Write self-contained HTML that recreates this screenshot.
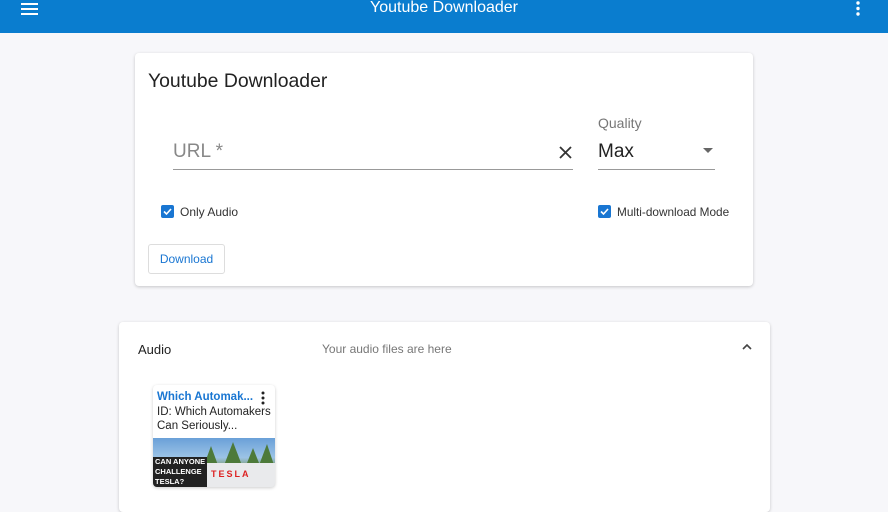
<!DOCTYPE html>
<html><head><style>
body{margin:0;width:888px;height:500px;background:#f7f7fa;font-family:"Liberation Sans",sans-serif;overflow:hidden;position:relative}
.bar{position:absolute;left:0;top:0;width:888px;height:33px;background:#0a7dcf;color:#fff}
.card{position:absolute;background:#fff;border-radius:4px;box-shadow:0 1px 3px rgba(0,0,0,.2)}
.abs{position:absolute}
.cb{position:absolute;width:13px;height:13px;background:#1976d2;border-radius:2px}
</style></head><body>
<div class="bar">
<svg class="abs" style="left:21px;top:2px" width="18" height="14"><rect y="1" width="17" height="2" fill="#fff"/><rect y="6" width="17" height="2" fill="#fff"/><rect y="11" width="17" height="2" fill="#fff"/></svg>
<div class="abs" style="left:0;width:888px;top:-1px;text-align:center;font-size:16px">Youtube Downloader</div>
<svg class="abs" style="left:856px;top:1px" width="4" height="15"><circle cx="2" cy="2" r="1.7" fill="#fff"/><circle cx="2" cy="7.5" r="1.7" fill="#fff"/><circle cx="2" cy="13" r="1.7" fill="#fff"/></svg>
</div>
<div class="card" style="left:135px;top:53px;width:618px;height:233px">
<div class="abs" style="left:13px;top:17px;font-size:19.4px;color:#222">Youtube Downloader</div>
<div class="abs" style="left:38px;top:88px;font-size:19px;color:#888">URL *</div>
<div class="abs" style="left:38px;top:116px;width:400px;height:1px;background:#999"></div>
<svg class="abs" style="left:424px;top:93px" width="13" height="13"><path d="M1 1L12 12M12 1L1 12" stroke="#333" stroke-width="1.8"/></svg>
<div class="abs" style="left:463px;top:62px;font-size:14px;color:#777">Quality</div>
<div class="abs" style="left:463px;top:88px;font-size:19px;color:#222">Max</div>
<svg class="abs" style="left:568px;top:95px" width="10" height="5"><path d="M0 0L10 0L5 5Z" fill="#666"/></svg>
<div class="abs" style="left:463px;top:116px;width:117px;height:1px;background:#999"></div>
<div class="cb" style="left:26px;top:152px"><svg width="13" height="13"><path d="M3 6.5L5.5 9L10 4" stroke="#fff" stroke-width="1.6" fill="none"/></svg></div>
<div class="abs" style="left:45px;top:152px;font-size:12px;color:#333">Only Audio</div>
<div class="cb" style="left:463px;top:152px"><svg width="13" height="13"><path d="M3 6.5L5.5 9L10 4" stroke="#fff" stroke-width="1.6" fill="none"/></svg></div>
<div class="abs" style="left:482px;top:152px;font-size:11.8px;color:#333">Multi-download Mode</div>
<div class="abs" style="left:13px;top:191px;width:75px;height:28px;border:1px solid #ddd;border-radius:3px;color:#1976d2;font-size:12px;text-align:center;line-height:28px">Download</div>
</div>
<div class="card" style="left:119px;top:322px;width:651px;height:190px">
<div class="abs" style="left:19px;top:20px;font-size:13px;color:#222">Audio</div>
<div class="abs" style="left:203px;top:20px;font-size:12px;color:#777">Your audio files are here</div>
<svg class="abs" style="left:623px;top:21px" width="10" height="7"><path d="M1 6L5 2L9 6" stroke="#444" stroke-width="1.6" fill="none"/></svg>
<div class="card" style="left:34px;top:63px;width:122px;height:102px;overflow:hidden">
<div class="abs" style="left:4px;top:6px;font-size:11.5px;font-weight:bold;color:#1976d2">Which Automak...</div>
<svg class="abs" style="left:108px;top:6px" width="4" height="14"><circle cx="2" cy="2" r="1.5" fill="#222"/><circle cx="2" cy="7" r="1.5" fill="#222"/><circle cx="2" cy="12" r="1.5" fill="#222"/></svg>
<div class="abs" style="left:4px;top:20px;font-size:11.5px;color:#222;line-height:14px">ID: Which Automakers<br>Can Seriously...</div>
<div class="abs" style="left:0;top:53px;width:122px;height:49px;background:linear-gradient(#6aa0d8,#9cc3e6 40%,#7a9a6a 60%,#cfd3d8 75%)"></div>
<svg class="abs" style="left:0;top:53px" width="122" height="30"><path d="M50 30L58 8L66 30ZM70 30L80 4L90 30ZM92 30L100 10L108 30ZM105 30L114 6L122 30Z" fill="#4d7a3a"/></svg>
<div class="abs" style="left:52px;top:78px;width:70px;height:24px;background:#e9eaec"></div>
<div class="abs" style="left:58px;top:84px;font-size:9px;color:#d22;letter-spacing:2px;font-weight:bold">TESLA</div>
<div class="abs" style="left:0;top:72px;width:52px;height:30px;background:#222;color:#fff;font-size:7.5px;font-weight:bold;line-height:10px;padding-left:2px">CAN ANYONE<br>CHALLENGE<br>TESLA?</div>
</div>
</div>
</body></html>
